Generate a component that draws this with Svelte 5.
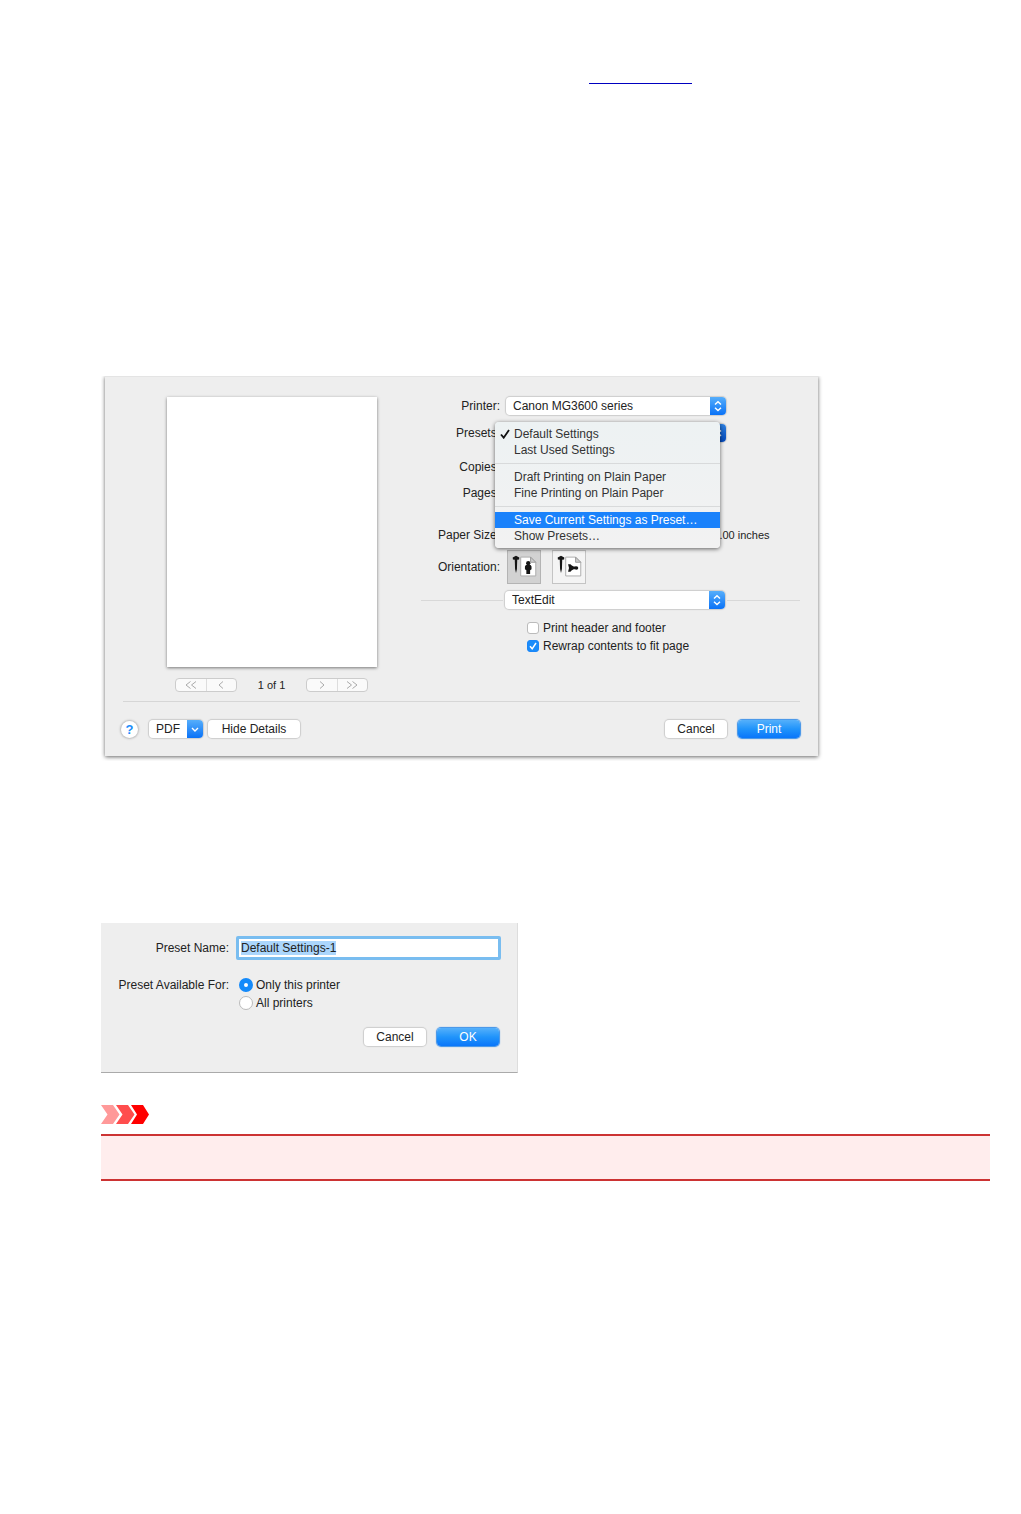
<script>
	import { onMount } from 'svelte';

	let presetName = $state('Default Settings-1');
	let preset = $state('Default Settings');
	let headerFooter = $state(false);
	let rewrap = $state(true);
	let available = $state('this');
	let orientation = $state('portrait');
	let nameInput;

	const menuGroups = [
		['Default Settings', 'Last Used Settings'],
		['Draft Printing on Plain Paper', 'Fine Printing on Plain Paper'],
		['Save Current Settings as Preset…', 'Show Presets…']
	];
	const highlighted = 'Save Current Settings as Preset…';

	onMount(() => {
		nameInput.focus({ preventScroll: true });
		nameInput.select();
	});
</script>

{#snippet cap()}
	<span class="cap">
		<svg viewBox="0 0 16 18" aria-hidden="true">
			<path d="M5 7.5 8 4.7 11 7.5M5 10.7 8 13.5 11 10.7" />
		</svg>
	</span>
{/snippet}

{#snippet pin()}
	<path class="ink" d="M8.5 5 12 7 11.8 9 9.8 9.300 9.5 19 8.5 23.5 7.5 19 7.2 9.300 5.200 9 5 7Z" />
	<path class="sheet" d="M13.500 6.5H24L29.5 12V26.5H13.500Z" />
	<path class="fold" d="M24 6.5V12H29.5Z" />
{/snippet}

<main>
	<p class="intro"><a href="#preset" aria-label="Preset"></a></p>

	<section class="print" aria-label="Print">
		<div class="body">
			<div class="preview">
				<div class="paper"></div>
				<div class="pager">
					<div class="segments">
						<button aria-label="First page"><svg viewBox="0 0 14 10"><path d="M6.5 1.5 2 5 6.5 8.500M12 1.500 7.500 5 12 8.500" /></svg></button>
						<button aria-label="Previous page"><svg viewBox="0 0 14 10"><path d="M9 1.500 5 5 9 8.500" /></svg></button>
					</div>
					<span>1 of 1</span>
					<div class="segments">
						<button aria-label="Next page"><svg viewBox="0 0 14 10"><path d="M5 1.500 9 5 5 8.500" /></svg></button>
						<button aria-label="Last page"><svg viewBox="0 0 14 10"><path d="M2 1.500 6.500 5 2 8.500M7.500 1.500 12 5 7.500 8.500" /></svg></button>
					</div>
				</div>
			</div>

			<div class="options">
				<div class="row">
					<label for="printer">Printer:</label>
					<div class="picker">
						<select id="printer"><option>Canon MG3600 series</option></select>
						{@render cap()}
					</div>
				</div>
				<div class="row presets">
					<label for="presets">Presets:</label>
					<div class="anchor">
						<div class="picker active">
							<select id="presets"><option>{preset}</option></select>
							{@render cap()}
						</div>
						<div class="menu" role="menu">
							{#each menuGroups as group, i}
								{#if i > 0}<hr />{/if}
								{#each group as item}
									<button role="menuitem" class:on={item === highlighted} onclick={() => (preset = item)}>
										<span class="tick">
											{#if item === preset}
												<svg viewBox="0 0 10 10" aria-hidden="true"><path d="M1 5.500 3.700 8.700 9 1" /></svg>
											{/if}
										</span>
										{item}
									</button>
								{/each}
							{/each}
						</div>
					</div>
				</div>
				<div class="row copies">
					<label for="copies">Copies:</label>
					<input id="copies" class="count" type="text" />
				</div>
				<div class="row pages">
					<label for="pages">Pages:</label>
					<input id="pages" class="count" type="text" />
				</div>
				<div class="row size">
					<label for="size">Paper Size:</label>
					<div class="size-value">
						<input id="size" class="size-name" type="text" />
						<span>11.00 inches</span>
					</div>
				</div>
				<div class="row orientation">
					<span class="name">Orientation:</span>
					<div class="tiles">
						<button aria-label="Portrait" class:on={orientation === 'portrait'} onclick={() => (orientation = 'portrait')}>
							<svg viewBox="0 0 34 34">
								{@render pin()}
								<circle class="ink" cx="21.500" cy="13" r="2.300" />
								<path class="ink" d="M19 15H24L25 16.500V19.500L23.500 20.500V24.500H19.500V20.500L18 19.500V16.500Z" />
							</svg>
						</button>
						<button aria-label="Landscape" class:on={orientation === 'landscape'} onclick={() => (orientation = 'landscape')}>
							<svg viewBox="0 0 34 34">
								{@render pin()}
								<path class="ink" d="M16 14H18.500L20 15.500 22 16.500H24.500V19.500H22L20 20.500 18.500 22H16L17 18Z" />
								<circle class="ink" cx="25" cy="18" r="1.800" />
							</svg>
						</button>
					</div>
				</div>
				<div class="pane">
					<div class="picker">
						<select aria-label="Options pane"><option>TextEdit</option></select>
						{@render cap()}
					</div>
				</div>
				<div class="checks">
					<label><input type="checkbox" bind:checked={headerFooter} />Print header and footer</label>
					<label><input type="checkbox" bind:checked={rewrap} />Rewrap contents to fit page</label>
				</div>
			</div>
		</div>

		<footer>
			<button class="help" aria-label="Help">?</button>
			<button class="btn pdf">
				<span>PDF</span>
				<span class="cap"><svg viewBox="0 0 16 18" aria-hidden="true"><path d="M5 8 8 11 11 8" /></svg></span>
			</button>
			<button class="btn details">Hide Details</button>
			<button class="btn cancel">Cancel</button>
			<button class="btn primary">Print</button>
		</footer>
	</section>

	<section class="save" id="preset" aria-label="Save preset">
		<div class="line">
			<label for="name">Preset Name:</label>
			<input id="name" class="text" type="text" bind:value={presetName} bind:this={nameInput} />
		</div>
		<div class="line avail">
			<span class="name">Preset Available For:</span>
			<div class="radios">
				<label><input type="radio" name="available" value="this" bind:group={available} />Only this printer</label>
				<label><input type="radio" name="available" value="all" bind:group={available} />All printers</label>
			</div>
		</div>
		<div class="actions">
			<button class="btn">Cancel</button>
			<button class="btn primary">OK</button>
		</div>
	</section>

	<svg class="arrows" viewBox="0 0 48 19" aria-hidden="true">
		<path fill="#ff9999" d="M0 0H12L18.500 9.500 12 19H0L6.500 9.500Z" />
		<path fill="#ff4d4d" d="M15 0H27L33.500 9.500 27 19H15L21.500 9.500Z" />
		<path fill="#ff0000" d="M30 0H42L48 9.500 42 19H30L36 9.500Z" />
	</svg>
	<div class="notice"></div>
</main>

<style>
	:global(body) {
		margin: 0;
		background: #fff;
	}

	main {
		padding: 64px 31px 40px 101px;
		font: 12px/18px "Liberation Sans", Arial, sans-serif;
		color: #222;
	}

	button, input, select {
		box-sizing: border-box;
		margin: 0;
		padding: 0;
		border: 0;
		font: inherit;
		color: inherit;
		background: none;
		appearance: none;
		outline: none;
	}

	svg {
		display: block;
		fill: none;
	}

	.intro {
		display: flex;
		margin: 0 0 292px;
		padding-left: 488px;
	}

	.intro a {
		width: 103px;
		height: 19px;
		border-bottom: 1px solid #0000c0;
	}

	/* print dialog */
	.print {
		box-sizing: border-box;
		max-width: 713px;
		margin-left: 4px;
		padding: 20px 18px 18px;
		background: #eee;
		border-top: 1px solid #e4e4e4;
		box-shadow: 0 1px 4px rgba(0, 0, 0, 0.6);
		clip-path: inset(0 -5px -5px -4px);
	}

	.body {
		display: flex;
		gap: 44px;
		padding-left: 44px;
	}

	.preview {
		width: 210px;
	}

	.paper {
		height: 270px;
		background: #fff;
		box-shadow: 0 1px 3px rgba(0, 0, 0, 0.5);
	}

	.pager {
		display: flex;
		align-items: center;
		justify-content: space-between;
		margin-top: 11px;
		padding: 0 9px 0 8px;
		font-size: 11px;
		line-height: 14px;
	}

	.segments {
		display: flex;
		width: 62px;
		height: 14px;
		box-sizing: border-box;
		border: 1px solid #ccc;
		border-radius: 4px;
		background: #fafafa;
	}

	.segments button {
		display: grid;
		place-items: center;
		flex: 1;
	}

	.segments button + button {
		border-left: 1px solid #ddd;
	}

	.segments svg {
		width: 14px;
		height: 10px;
		stroke: #aaa;
	}

	.options {
		flex: 1;
	}

	.row {
		display: grid;
		grid-template-columns: 79px 1fr;
		gap: 6px;
		align-items: center;
		min-height: 18px;
	}

	.row > label, .row > .name {
		text-align: right;
		white-space: nowrap;
	}

	.presets {
		margin-top: 9px;
	}

	.copies {
		margin-top: 16px;
	}

	.pages {
		margin-top: 8px;
	}

	.size {
		margin-top: 24px;
	}

	.orientation {
		margin-top: 6px;
	}

	.picker {
		display: grid;
		grid-template-columns: 1fr 16px;
		width: 220px;
		height: 18px;
		border-radius: 4px;
		background: #fff;
		box-shadow: 0 0 1px 1px #ccc;
		overflow: hidden;
	}

	.picker select {
		grid-area: 1 / 1 / 2 / 3;
		padding: 0 20px 0 7px;
		line-height: 18px;
	}

	.cap {
		grid-area: 1 / 2;
		width: 16px;
		height: 18px;
		background: linear-gradient(#56aefb, #0a72f7);
		pointer-events: none;
	}

	.cap svg {
		stroke: #fff;
		stroke-width: 1.4;
	}

	.active .cap {
		background: linear-gradient(#2d7fe0, #0448b8);
	}

	.anchor {
		position: relative;
	}

	.menu {
		position: absolute;
		top: -2px;
		left: -11px;
		z-index: 1;
		box-sizing: border-box;
		width: 225px;
		padding: 4px 0;
		border-radius: 4px;
		background: linear-gradient(#edf2f3, #f2f2f2);
		box-shadow: 0 1px 4px rgba(0, 0, 0, 0.6);
		color: #333;
	}

	.menu button {
		display: flex;
		align-items: center;
		width: 100%;
		height: 16px;
		line-height: 16px;
		white-space: nowrap;
	}

	.menu button.on {
		background: #1a82fb;
		color: #fff;
	}

	.menu hr {
		height: 1px;
		margin: 5px 0;
		border: 0;
		background: #d8dadb;
	}

	.tick {
		width: 14px;
		padding-left: 5px;
	}

	.tick svg {
		width: 10px;
		height: 10px;
		stroke: #111;
		stroke-width: 1.8;
	}

	.count {
		width: 60px;
		height: 16px;
		background: #fff;
	}

	.size-value {
		display: flex;
		gap: 6px;
		font-size: 11px;
	}

	.size-name {
		width: 196px;
		height: 18px;
		background: #fff;
	}

	.tiles {
		display: flex;
		gap: 11px;
		padding-left: 1px;
	}

	.tiles button {
		width: 34px;
		height: 34px;
		border: 1px solid #c4c4c4;
		background: #f4f4f4;
	}

	.tiles button.on {
		background: #d2d2d2;
		border-color: #b4b4b4;
	}

	.ink {
		fill: #151515;
	}

	.sheet {
		fill: #fff;
		stroke: #aaa;
	}

	.fold {
		fill: #ccc;
		stroke: #999;
	}

	.pane {
		display: flex;
		align-items: center;
		gap: 2px;
		margin-top: 7px;
	}

	.pane::before, .pane::after {
		content: "";
		height: 1px;
		background: #d8d8d8;
	}

	.pane::before {
		width: 82px;
	}

	.pane::after {
		flex: 1;
	}

	.checks {
		display: grid;
		margin: 10px 0 0 106px;
	}

	.checks label, .radios label {
		display: flex;
		align-items: center;
		white-space: nowrap;
	}

	.checks label {
		gap: 4px;
	}

	.checks input {
		width: 12px;
		height: 12px;
		border-radius: 3px;
		border: 1px solid #bbb;
		background: #fff;
	}

	.checks input:checked {
		border-color: #1a86f8;
		background: #1a8cfa url("data:image/svg+xml,%3Csvg xmlns='http://www.w3.org/2000/svg' viewBox='0 0 10 10'%3E%3Cpath fill='none' stroke='white' stroke-width='1.5' d='M2 5.2 4.200 7.800 8 2'/%3E%3C/svg%3E") center / 10px 10px;
	}

	footer {
		display: flex;
		align-items: center;
		margin-top: 9px;
		padding-top: 18px;
		border-top: 1px solid #d6d6d6;
	}

	.help {
		width: 17px;
		height: 17px;
		margin: 0 11px 0 -2px;
		border-radius: 50%;
		background: #fff;
		box-shadow: 0 0 2px 1px #bbb;
		color: #1a8cfa;
		font-size: 13px;
		font-weight: bold;
		line-height: 17px;
	}

	.btn {
		width: 62px;
		height: 18px;
		border-radius: 4px;
		background: #fff;
		box-shadow: 0 0 1px 1px #ccc;
		line-height: 18px;
	}

	.pdf {
		display: flex;
		width: 54px;
		overflow: hidden;
	}

	.pdf span:first-child {
		flex: 1;
	}

	.details {
		width: 92px;
		margin-left: 5px;
	}

	.cancel {
		margin-left: auto;
	}

	.btn.primary {
		margin-left: 11px;
		background: linear-gradient(#55b0fb, #2094fb 50%, #0a76fa);
		box-shadow: 0 0 1px 1px #3a8fe8;
		color: #fff;
	}

	/* preset name dialog */
	.save {
		box-sizing: border-box;
		max-width: 417px;
		margin-top: 167px;
		padding: 13px 16px 26px 14px;
		background: #eee;
		border-right: 1px solid #ddd;
		border-bottom: 1px solid #aaa;
	}

	.line {
		display: grid;
		grid-template-columns: 114px 1fr;
		gap: 7px;
		align-items: center;
	}

	.line > label, .line > .name {
		text-align: right;
		white-space: nowrap;
	}

	.text {
		height: 24px;
		padding: 0 2px;
		border: 3px solid #79bdf0;
		border-radius: 2px;
		background: #fff;
	}

	.text::selection {
		background: #abd6fc;
		color: #222;
	}

	.avail {
		align-items: start;
		margin-top: 16px;
	}

	.radios {
		padding-left: 3px;
	}

	.radios label {
		gap: 3px;
	}

	.radios input {
		width: 14px;
		height: 14px;
		border: 1px solid #bbb;
		border-radius: 50%;
		background: #fff;
	}

	.radios input:checked {
		border: 5px solid #148afa;
	}

	.actions {
		display: flex;
		justify-content: flex-end;
		margin-top: 16px;
		padding-right: 2px;
	}

	.arrows {
		width: 48px;
		height: 19px;
		margin-top: 32px;
	}

	.notice {
		height: 43px;
		margin-top: 10px;
		border: solid #cc3333;
		border-width: 2px 0;
		background: #ffeded;
	}
</style>
